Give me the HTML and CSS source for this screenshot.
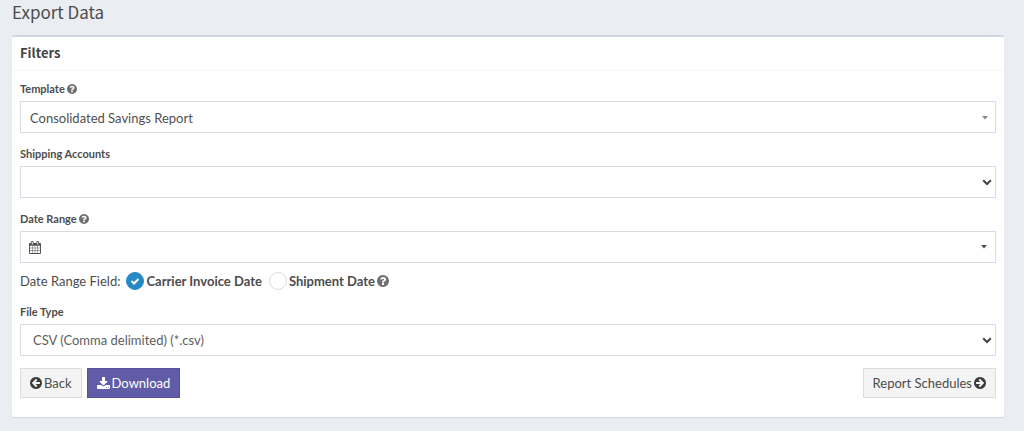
FILE: index.html
```html
<!DOCTYPE html>
<html lang="en">
<head>
<meta charset="utf-8">
<title>Export Data</title>
<meta name="viewport" content="width=device-width, initial-scale=1">
<link rel="stylesheet" href="styles.css">
</head>
<body>
<svg class="sprite" aria-hidden="true">
  <symbol id="help" viewBox="128 128 1536 1536"><path d="M1024 1376v-192q0-14-9-23t-23-9h-192q-14 0-23 9t-9 23v192q0 14 9 23t23 9h192q14 0 23-9t9-23zM1280 704q0-88-55.500-163t-138.500-116-170-41q-243 0-371 213-15 24 8 42l132 100q7 6 19 6 16 0 25-12 53-68 86-92 34-24 86-24 48 0 85.500 26t37.500 59q0 38-20 61t-68 45q-63 28-115.500 86.500t-52.500 125.500v36q0 14 9 23t23 9h192q14 0 23-9t9-23q0-19 21.500-49.500t54.500-49.500q32-18 49-28.500t46-35 44.500-48 28-60.500 12.500-81zM1664 896q0 209-103 385.500t-279.500 279.500-385.500 103-385.500-103-279.500-279.500-103-385.500 103-385.500 279.500-279.500 385.500-103 385.500 103 279.500 279.500 103 385.500z"/></symbol>
  <symbol id="arrow" viewBox="128 128 1536 1536"><path d="M1408 960v-128q0-26-19-45t-45-19h-502l189-189q19-19 19-45t-19-45l-91-91q-18-18-45-18t-45 18l-362 362-91 91q-18 18-18 45t18 45l91 91 362 362q18 18 45 18t45-18l91-91q18-18 18-45t-18-45l-189-189h502q26 0 45-19t19-45zm256-64q0 209-103 385.500t-279.500 279.500-385.500 103-385.500-103-279.500-279.500-103-385.500 103-385.500 279.500-279.500 385.500-103 385.500 103 279.500 279.500 103 385.500z"/></symbol>
  <symbol id="chevron" viewBox="0 0 10 7"><path d="M1.200 1.300 5 5l3.800-3.700" fill="none" stroke="currentColor" stroke-width="2"/></symbol>
  <symbol id="caret" viewBox="0 0 6 4"><path d="M0 0h6L3 3.500z"/></symbol>
</svg>
<main class="page">
  <h1 class="page-title">Export Data</h1>
  <form class="card">
    <h2 class="card-title">Filters</h2>
    <div class="card-body">
      <div class="field">
        <div class="label-row"><label class="label" for="template">Template</label><svg class="icon-help" role="img" aria-label="Help"><use href="#help"/></svg></div>
        <div class="control-wrap">
          <select class="control control-compact" id="template"><option>Consolidated Savings Report</option></select>
          <svg class="caret" aria-hidden="true"><use href="#caret"/></svg>
        </div>
      </div>
      <div class="field">
        <div class="label-row"><label class="label" for="accounts">Shipping Accounts</label></div>
        <div class="control-wrap">
          <select class="control" id="accounts"><option></option></select>
          <svg class="chevron" aria-hidden="true"><use href="#chevron"/></svg>
        </div>
      </div>
      <div class="field">
        <div class="label-row"><label class="label" for="range">Date Range</label><svg class="icon-help" role="img" aria-label="Help"><use href="#help"/></svg></div>
        <button class="control control-range" id="range" type="button">
          <svg class="icon-calendar" viewBox="64 0 1664 1792" aria-hidden="true"><path d="M192 1664h288v-288h-288v288zm352 0h320v-288h-320v288zm-352-352h288v-320h-288v320zm352 0h320v-320h-320v320zm-352-384h288v-288h-288v288zm736 736h320v-288h-320v288zm-384-736h320v-288h-320v288zm768 736h288v-288h-288v288zm-384-352h320v-320h-320v320zm-352-864v-288q0-13-9.500-22.500t-22.500-9.500h-64q-13 0-22.500 9.500t-9.500 22.500v288q0 13 9.500 22.500t22.500 9.500h64q13 0 22.500-9.500t9.500-22.500zm736 864h288v-320h-288v320zm-384-384h320v-288h-320v288zm384 0h288v-288h-288v288zm32-480v-288q0-13-9.500-22.500t-22.500-9.500h-64q-13 0-22.500 9.500t-9.500 22.500v288q0 13 9.500 22.500t22.500 9.500h64q13 0 22.500-9.500t9.500-22.500zm384-64v1280q0 52-38 90t-90 38h-1408q-52 0-90-38t-38-90v-1280q0-52 38-90t90-38h128v-96q0-66 47-113t113-47h64q66 0 113 47t47 113v96h384v-96q0-66 47-113t113-47h64q66 0 113 47t47 113v96h128q52 0 90 38t38 90z"/></svg>
          <svg class="caret-inline" aria-hidden="true"><use href="#caret"/></svg>
        </button>
        <div class="radio-row" role="radiogroup" aria-labelledby="range-field">
          <span class="radio-caption" id="range-field">Date Range Field:</span>
          <label class="radio"><span class="radio-mark"><input class="radio-input" type="radio" name="range-field" checked><svg class="tick" viewBox="0 0 18 18" aria-hidden="true"><path d="M5.500 9l2.500 2.500 4.500-4.500"/></svg></span>Carrier Invoice Date</label>
          <label class="radio"><span class="radio-mark"><input class="radio-input" type="radio" name="range-field"></span>Shipment Date</label>
          <svg class="icon-help icon-help-large" role="img" aria-label="Help"><use href="#help"/></svg>
        </div>
      </div>
      <div class="field">
        <div class="label-row"><label class="label" for="filetype">File Type</label></div>
        <div class="control-wrap">
          <select class="control" id="filetype"><option>CSV (Comma delimited) (*.csv)</option></select>
          <svg class="chevron" aria-hidden="true"><use href="#chevron"/></svg>
        </div>
      </div>
      <div class="actions">
        <button class="btn" type="button"><svg class="icon-arrow" aria-hidden="true"><use href="#arrow"/></svg>Back</button>
        <button class="btn btn-primary" type="submit"><svg class="icon-download" viewBox="64 0 1664 1664" aria-hidden="true"><path d="M1344 1344q0-26-19-45t-45-19-45 19-19 45 19 45 45 19 45-19 19-45zm256 0q0-26-19-45t-45-19-45 19-19 45 19 45 45 19 45-19 19-45zm128-224v320q0 40-28 68t-68 28h-1472q-40 0-68-28t-28-68v-320q0-40 28-68t68-28h465l135 136q58 56 136 56t136-56l136-136h464q40 0 68 28t28 68zm-325-569q17 41-14 70l-448 448q-18 19-45 19t-45-19l-448-448q-31-29-14-70 17-39 59-39h256v-448q0-26 19-45t45-19h256q26 0 45 19t19 45v448h256q42 0 59 39z"/></svg>Download</button>
        <button class="btn btn-end" type="button">Report Schedules<svg class="icon-arrow icon-flip" aria-hidden="true"><use href="#arrow"/></svg></button>
      </div>
    </div>
  </form>
</main>
</body>
</html>
```
FILE: styles.css
```css
* { box-sizing: border-box; }
body {
  margin: 0;
  background: #eaeef3;
  color: #4c4c4c;
  font: 13px/20px Lato, "Liberation Sans", sans-serif;
}
svg { fill: currentColor; flex: none; }
.sprite { position: absolute; width: 0; height: 0; }
.page { padding: 0 20px 14px 12px; }
.page-title {
  margin: 0;
  padding: 0 0 11px;
  font: 400 17px/24px "Noto Sans CJK SC", "Noto Sans", sans-serif;
}
.card {
  background: #fff;
  border-top: 2px solid #d2d6de;
  border-radius: 3px;
  box-shadow: 0 1px 1px rgba(0, 0, 0, .1);
}
.card-title {
  margin: 0;
  padding: 6px 8px 7px;
  border-bottom: 1px solid #f4f4f4;
  color: #444;
  font: 700 13px/20px "Noto Sans CJK SC", "Noto Sans", sans-serif;
}
.card-body { padding: 10px 8px 19px; }
.field + .field { margin-top: 13px; }
.label-row { display: flex; align-items: center; gap: 2px; margin-bottom: 4px; }
.label { font-size: 11px; line-height: 16px; font-weight: 700; }
.icon-help { width: 10px; height: 10px; color: #707070; }
.icon-help-large { width: 12px; height: 12px; }
.control-wrap { position: relative; }
.control {
  display: block;
  width: 100%;
  height: 32px;
  padding: 0 12px;
  appearance: none;
  border: 1px solid #d8dae4;
  border-radius: 0;
  background: #fff;
  color: #606060;
  font: inherit;
}
.control-compact { padding: 2px 9px 0; color: #505050; }
.control-range { display: flex; align-items: center; justify-content: space-between; padding: 0 8px; color: #505050; }
.chevron { position: absolute; right: 4px; top: 13px; width: 10px; height: 7px; color: #444; pointer-events: none; }
.caret { position: absolute; right: 8px; top: 15px; width: 6px; height: 4px; color: #888; pointer-events: none; }
.caret-inline { width: 6px; height: 4px; }
.icon-calendar { width: 12px; height: 13px; }
.radio-row { display: flex; align-items: center; margin-top: 8px; }
.radio-caption { margin-right: 6px; }
.radio { display: flex; align-items: center; gap: 2px; margin-right: 7px; font-weight: 700; }
.radio + .icon-help { margin-left: -5px; }
.radio-mark { display: grid; }
.radio-mark > * { grid-area: 1 / 1; }
.radio-input {
  width: 18px;
  height: 18px;
  margin: 0;
  appearance: none;
  border: 1px solid #ddd;
  border-radius: 50%;
  background: #fff;
}
.radio-input:checked { border-color: #2489c5; background: #2489c5; }
.tick { z-index: 1; width: 18px; height: 18px; fill: none; stroke: #fff; stroke-width: 2; pointer-events: none; }
.actions { display: flex; gap: 5px; margin-top: 12px; }
.btn {
  display: flex;
  align-items: center;
  gap: 2px;
  height: 30px;
  padding: 0 9px;
  border: 1px solid #ddd;
  border-radius: 0;
  background: #f4f4f4;
  color: #4c4c4c;
  font: inherit;
}
.btn-primary { border-color: #555299; background: #605ca8; color: #fff; }
.btn-end { margin-left: auto; }
.icon-arrow { width: 12px; height: 12px; color: #3c3c3c; }
.icon-flip { transform: scaleX(-1); }
.icon-download { width: 13px; height: 13px; }
```
